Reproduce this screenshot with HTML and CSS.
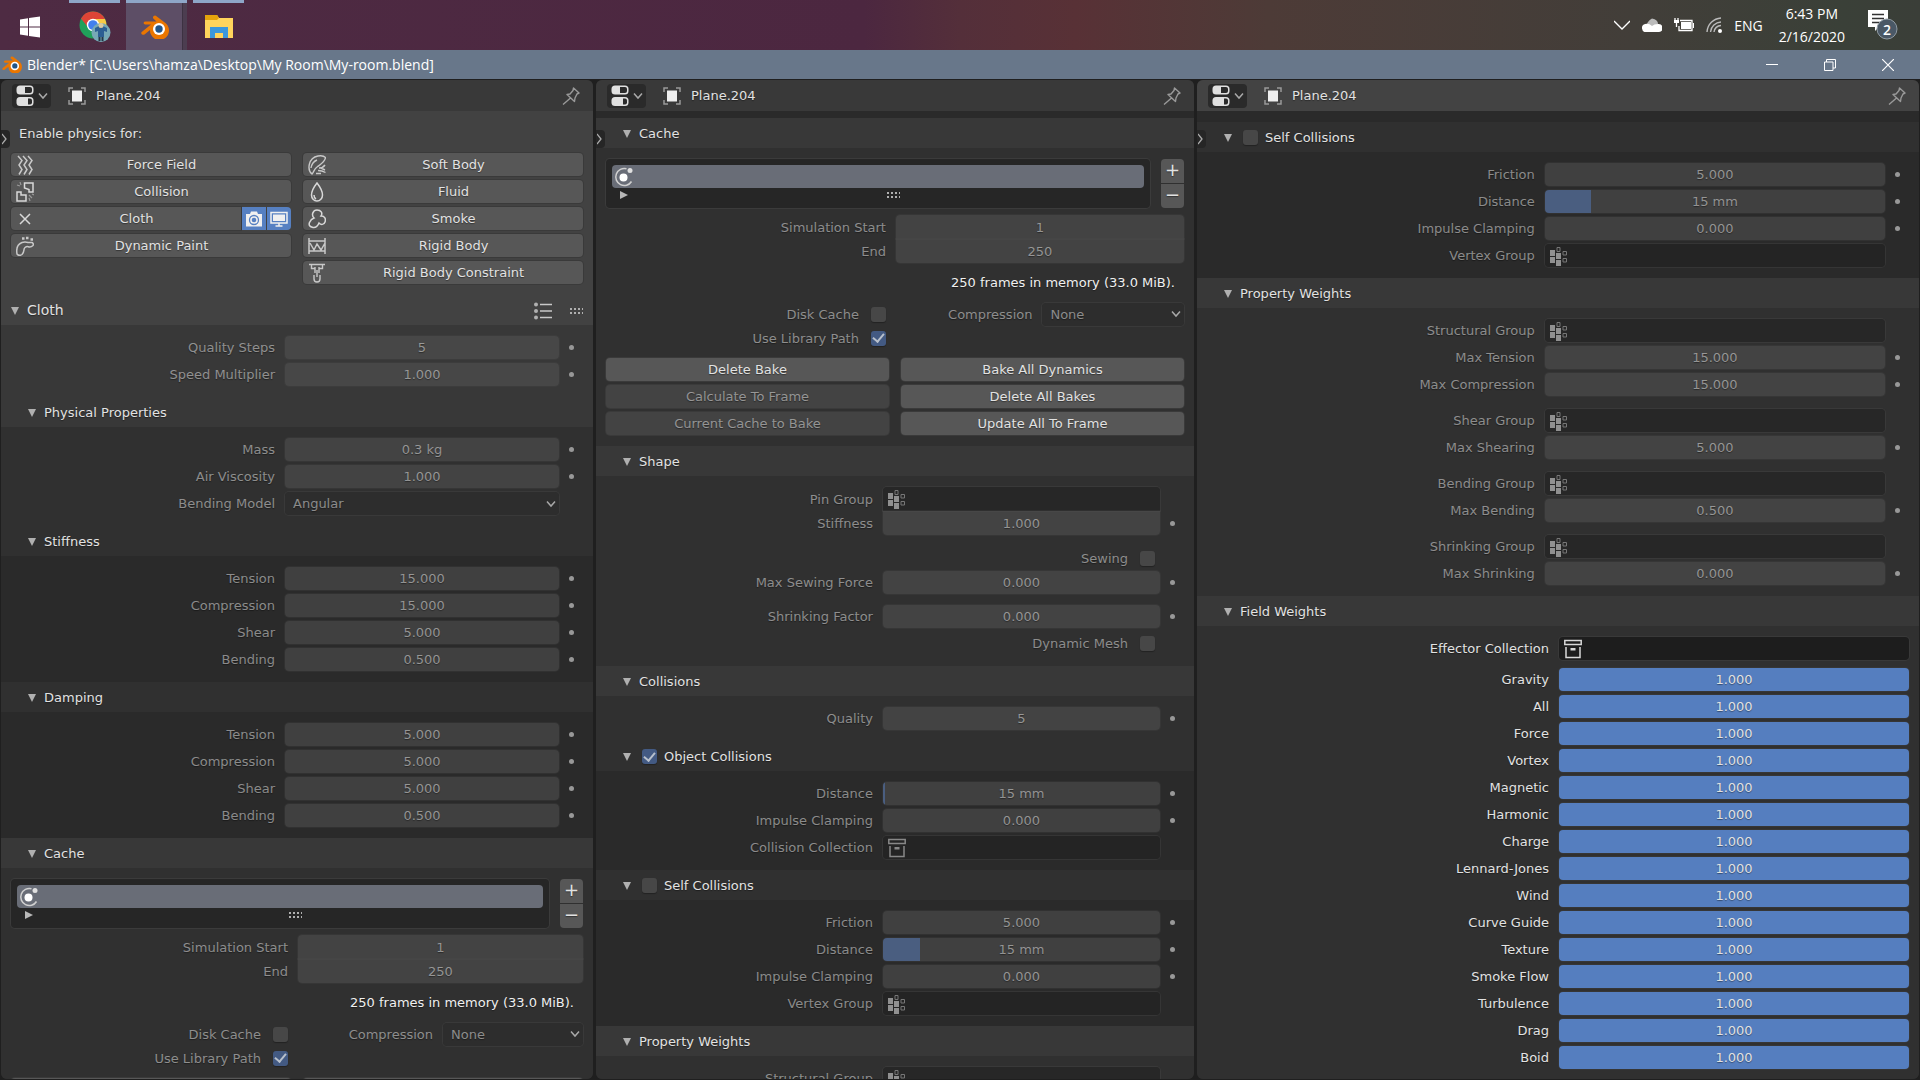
FILE: index.html
```html
<!DOCTYPE html>
<html lang="en">
<head>
<meta charset="utf-8">
<title>Blender* [C:\Users\hamza\Desktop\My Room\My-room.blend]</title>
<link rel="stylesheet" href="styles.css">
</head>
<body>
<svg class="defs" aria-hidden="true">
  <symbol id="i-tri" viewBox="0 0 10 10"><path d="M1 1h8L5 9z" fill="#b0b0b0"/></symbol>
  <symbol id="i-blender" viewBox="0 0 28 24">
    <path d="M12.500 1.200Q14 0 15.500 1.200L25 8.500A9.500 9.500 0 1 1 9 15L3.500 19.500Q1 20.500.3 18.500 0 17.500 1 16.800L10 9.500H4Q2.400 9 2.600 7.800 3 6.500 4.500 6.500H15.500L12.300 3.500Q11.500 2.200 12.500 1.200z" fill="#ea7600"/>
    <circle cx="18" cy="14" r="6" fill="#fff"/><circle cx="18" cy="14" r="3.700" fill="#225588"/>
  </symbol>
  <symbol id="i-editor" viewBox="0 0 18 22">
    <rect x=".5" y=".5" width="17" height="9" rx="3.500" fill="#e0e0e0"/><path d="M9 2h5q2 0 2 2v2q0 2-2 2H9z" fill="#2a2a2a"/>
    <rect x=".5" y="12" width="17" height="9" rx="3.500" fill="#e0e0e0"/><path d="M12 13.500h2q2 0 2 2v2q0 2-2 2h-2z" fill="#2a2a2a"/>
  </symbol>
  <symbol id="i-chev" viewBox="0 0 10 8"><path d="M1 1.500l4 4.500 4-4.500" fill="none" stroke="#a8a8a8" stroke-width="1.500"/></symbol>
  <symbol id="i-object" viewBox="0 0 18 18"><path d="M1 5V1h4M13 1h4v4M17 13v4h-4M5 17H1v-4" fill="none" stroke="#999" stroke-width="1.500"/><rect x="4" y="3.500" width="10" height="11" fill="#eee"/></symbol>
  <symbol id="i-pin" viewBox="0 0 18 18"><path d="M11.500 1l5.500 5-2 1-2 4-.5 3.500L5 7.500l3-.5 3-3.500zM8.500 11L1 17.500" fill="none" stroke="#999" stroke-width="1.400" stroke-linejoin="round"/></symbol>
  <symbol id="i-group" viewBox="0 0 18 20"><path d="M0 4h5v6H0zM0 11h5v6H0zM6 7h5v6H6zM6 14h5v6H6z" fill="#909090"/><path d="M7 1.500h3v4H7zM13 5.500h3.500v3.500H13zM13 12.500h3.500v3.500H13z" fill="none" stroke="#777"/></symbol>
  <symbol id="i-box" viewBox="0 0 18 20"><path d="M.8 1.500h16.400v4H.8zM2 8v10.500h14V8" fill="none" stroke="currentColor" stroke-width="1.500"/><path d="M6.500 9h5v2.500h-5z" fill="currentColor"/></symbol>
  <symbol id="i-cache" viewBox="0 0 20 20"><path d="M12.500 1.800A8.500 8.500 0 1 0 17.500 14.500" fill="none" stroke="#d0d0d0" stroke-width="1.500"/><circle cx="9.500" cy="10.500" r="4" fill="#fff"/><circle cx="16" cy="3.500" r="2.500" fill="#e0e0e0"/></symbol>
  <symbol id="i-grip" viewBox="0 0 14 8"><path d="M1 1h2v2H1zM5 1h2v2H5zM9 1h2v2H9zM13 1h1v2h-1zM1 5h2v2H1zM5 5h2v2H5zM9 5h2v2H9zM13 5h1v2h-1z" fill="#b0b0b0"/></symbol>
  <symbol id="i-force" viewBox="0 0 18 20"><path d="M2 1l4 4.500-3 4.500 3 4.500-3 5M7 1l4 4.500-3 4.500 3 4.500-3 5M12 1l4 4.500-3 4.500 3 4.500-3 5" fill="none" stroke="#c8c8c8" stroke-width="1.500"/></symbol>
  <symbol id="i-collision" viewBox="0 0 18 20"><path d="M8.500 1H17v9h-4V7.500L8.500 6zM1 10h4v3h5v6H1z" fill="none" stroke="#d8d8d8" stroke-width="1.500"/><path d="M1 3l3 1M4 0l1 3M13 13l3 3M13 16l1 3M16 12l2 1" stroke="#999" stroke-width="1.200"/></symbol>
  <symbol id="i-x" viewBox="0 0 18 20"><path d="M4 5l10 10M14 5L4 15" stroke="#d8d8d8" stroke-width="1.500"/></symbol>
  <symbol id="i-paint" viewBox="0 0 18 20"><path d="M1 18C0 12 2 8 6 6.500q3-1 6 0h4q2 1 1 3-2 2-4 1.500-2-1-4 .5c-2 1.500 0 4-3 7q-3 2-5-.5z" fill="none" stroke="#c8c8c8" stroke-width="1.500"/><path d="M6 2.500h2.500M10 2h2.500M14.500 3.500H17" stroke="#c8c8c8" stroke-width="2.500"/></symbol>
  <symbol id="i-soft" viewBox="0 0 18 20"><path d="M4 19C-1 15 0 3 10 1q5-1 7.500 1.500C17 7 13 9 9 12c-3 2-3 5-5 7zM3 13Q4 7 9 5M11 13q4 0 6-3M10 15.500q4 0 7.500 2M8 18.500h5M13 13l4 2" fill="none" stroke="#c8c8c8" stroke-width="1.400"/></symbol>
  <symbol id="i-fluid" viewBox="0 0 18 20"><path d="M9 1q5.500 7 5.500 12a5.500 6 0 0 1-11 0Q3.500 8 9 1zM6 13q0 3 2 4" fill="none" stroke="#d8d8d8" stroke-width="1.500"/></symbol>
  <symbol id="i-smoke" viewBox="0 0 18 20"><path d="M6 9C3 6 5 1 9 1s6 3 4 6c4 0 5 3 4 6s-4 3-6 1q-2 5-6 4.500-5-1-3.500-5Q3 10 6 9z" fill="none" stroke="#d8d8d8" stroke-width="1.500"/></symbol>
  <symbol id="i-rigid" viewBox="0 0 18 20"><path d="M1 2v16M17 2v16M1 5h16M1 15h16M2 7l4 7 3-6 4 6 4-7" fill="none" stroke="#c8c8c8" stroke-width="1.500"/></symbol>
  <symbol id="i-constraint" viewBox="0 0 18 20"><path d="M1 1.500h16M3.500 2v3.500H7M14.500 2v3.500H11M7 4v6M11 4v6M9 7v7M6 12v4q0 3 3 3t3-3v-4" fill="none" stroke="#c8c8c8" stroke-width="1.400"/></symbol>
</svg>

<div class="app">
  <header class="taskbar">
    <nav class="tasks">
      <button class="task start" aria-label="Start"><svg width="20" height="22" viewBox="0 0 20 22"><path d="M0 3.500l8-1.200v8.200H0zM9 2l11-1.500v10H9zM0 11.500h8v8.200L0 18.500zM9 11.500h11v10L9 20z" fill="#fff"/></svg></button>
      <button class="task open" aria-label="Chrome"><svg width="32" height="32" viewBox="0 0 32 32"><circle cx="14" cy="14" r="13.500" fill="#20a05a"/><path d="M2 7.500A13.500 13.500 0 0 1 26 8H14L8 15z" fill="#dd4436"/><path d="M14 8h12a13.500 13.500 0 0 1-10 19.500l4-10z" fill="#f8ca45"/><circle cx="14" cy="14" r="6.200" fill="#fff"/><circle cx="14" cy="14" r="4.800" fill="#4280ee"/><circle cx="22" cy="21.500" r="9.500" fill="#76a9b6"/><path d="M16 17l4-2h4l4 2v4l-3-1v6h-6v-6l-3 1z" fill="#2c5f93"/><circle cx="22" cy="14.500" r="2.500" fill="#d9c9a2"/><path d="M19.500 26h2v4h-2zM22.500 26h2v4h-2z" fill="#243746"/></svg></button>
      <button class="task open active" aria-label="Blender"><svg width="28" height="24"><use href="#i-blender"/></svg></button>
      <button class="task open" aria-label="File Explorer"><svg width="28" height="24" viewBox="0 0 28 24"><path d="M0 0h12l2 3h14v20H0z" fill="#ffd45c"/><path d="M0 0h12l2 3-2 2H0z" fill="#e5a30c"/><path d="M5 23V12h18v11h-5v-5h-8v5z" fill="#3b97dc"/></svg></button>
    </nav>
    <div class="tray">
      <svg width="16" height="10" viewBox="0 0 16 10"><path d="M0 1l8 8 8-8" fill="none" stroke="#fff" stroke-width="1.300"/></svg>
      <svg width="20" height="14" viewBox="0 0 20 14"><path d="M4 9q1-6 6-8.500 6 1 6 5.500l-5 4z" fill="#bbb"/><path d="M4 14a3.500 4 0 0 1-1-8q4-1 7 2 2-2 6-2a4 4 0 0 1 1 8z" fill="#fff"/></svg>
      <svg width="20" height="14" viewBox="0 0 20 14"><path d="M6 2.500h12v10H5V8M1 0v3M4 0v3M2.500 5v4" fill="none" stroke="#fff" stroke-width="1.300"/><path d="M0 2h5v3H0zM7 4h10v7H7zM19 5h1v5h-1z" fill="#fff"/></svg>
      <svg width="16" height="16" viewBox="0 0 16 16"><path d="M1 15A15 15 0 0 1 15 1M4.500 15A11 11 0 0 1 15 5M8 15a7 7 0 0 1 7-6.500" fill="none" stroke="#bbb" stroke-width="1.400"/><circle cx="14" cy="14" r="2" fill="#fff"/></svg>
      <span class="lang">ENG</span>
      <time class="clock" datetime="2020-02-16T18:43">6:43 PM<br>2/16/2020</time>
      <button class="notes" aria-label="Notifications"><svg width="32" height="32" viewBox="0 0 32 32"><path d="M1 1h20v17h-9l-4 4v-4H1z" fill="#fff"/><path d="M5 5.500h12M5 9.500h12M5 13.500h8" stroke="#333" stroke-width="1.400"/><circle cx="20" cy="20" r="10" fill="#4a5866" stroke="#8f9aa3"/></svg><b>2</b></button>
    </div>
  </header>

  <div class="titlebar">
    <svg width="20" height="17"><use href="#i-blender"/></svg>
    <span>Blender* [C:\Users\hamza\Desktop\My Room\My-room.blend]</span>
    <div class="winbtns">
      <button aria-label="Minimize"><svg width="12" height="12" viewBox="0 0 12 12"><path d="M0 5.500h12" stroke="#fff"/></svg></button>
      <button aria-label="Restore"><svg width="12" height="12" viewBox="0 0 12 12"><path d="M.5 3h8.500v8.500H.5zM2.500 3V.5h9V9H9" fill="none" stroke="#fff"/></svg></button>
      <button aria-label="Close"><svg width="12" height="12" viewBox="0 0 12 12"><path d="M0 0l12 12M12 0L0 12" stroke="#fff" stroke-width="1.200"/></svg></button>
    </div>
  </div>

  <main class="areas">
    <section class="area">
      <header class="bar">
        <button class="editor" aria-label="Editor type"><svg width="18" height="22"><use href="#i-editor"/></svg><svg width="10" height="8"><use href="#i-chev"/></svg></button>
        <svg width="18" height="18"><use href="#i-object"/></svg><span>Plane.204</span>
        <svg class="pin" width="18" height="18"><use href="#i-pin"/></svg>
      </header>
      <button class="toggle" aria-label="Show region"><svg width="6" height="12" viewBox="0 0 6 12"><path d="M0 1l4 5-4 5" fill="none" stroke="#aaa" stroke-width="1.300"/></svg></button>
      <div class="physics">
        <p>Enable physics for:</p>
        <div class="pair">
          <div class="stack">
            <button class="btn phys"><svg width="18" height="20"><use href="#i-force"/></svg>Force Field</button>
            <button class="btn phys"><svg width="18" height="20"><use href="#i-collision"/></svg>Collision</button>
            <div class="split">
              <button class="btn phys"><svg width="18" height="20"><use href="#i-x"/></svg>Cloth</button>
              <button class="on" aria-label="Render"><svg width="18" height="16" viewBox="0 0 18 16"><path d="M1 3h4l1-2.500h6L13 3h4v12.500H1z" fill="#f0f0f0"/><circle cx="9" cy="9" r="4.500" fill="none" stroke="#5680c2" stroke-width="1.300"/><circle cx="9" cy="9" r="2.300" fill="#5680c2"/></svg></button>
              <button class="on" aria-label="Realtime"><svg width="18" height="16" viewBox="0 0 18 16"><path d="M1 1.500h16v10.500H1zM9 12v3M5.500 15h7" fill="none" stroke="#f0f0f0" stroke-width="1.500"/><path d="M3 3.500h12V10H3z" fill="#f0f0f0"/></svg></button>
            </div>
            <button class="btn phys"><svg width="18" height="20"><use href="#i-paint"/></svg>Dynamic Paint</button>
          </div>
          <div class="stack">
            <button class="btn phys"><svg width="18" height="20"><use href="#i-soft"/></svg>Soft Body</button>
            <button class="btn phys"><svg width="18" height="20"><use href="#i-fluid"/></svg>Fluid</button>
            <button class="btn phys"><svg width="18" height="20"><use href="#i-smoke"/></svg>Smoke</button>
            <button class="btn phys"><svg width="18" height="20"><use href="#i-rigid"/></svg>Rigid Body</button>
            <button class="btn phys"><svg width="18" height="20"><use href="#i-constraint"/></svg>Rigid Body Constraint</button>
          </div>
        </div>
      </div>
      <div class="head top l0">
        <svg width="10" height="10"><use href="#i-tri"/></svg><h2>Cloth</h2>
        <svg class="presets" width="18" height="18" viewBox="0 0 18 18"><path d="M6 2.500h12M6 9h12M6 15.500h12" stroke="#c8c8c8" stroke-width="1.500"/><circle cx="2" cy="2.500" r="2" fill="#b0b0b0"/><circle cx="2" cy="9" r="2" fill="#b0b0b0"/><circle cx="2" cy="15.500" r="2" fill="#b0b0b0"/></svg>
        <svg width="14" height="8"><use href="#i-grip"/></svg>
      </div>
      <div class="body l1">
        <label class="row key"><span>Quality Steps</span><input class="num" value="5" disabled></label>
        <label class="row key"><span>Speed Multiplier</span><input class="num" value="1.000" disabled></label>
      </div>
      <div class="head l1"><svg width="10" height="10"><use href="#i-tri"/></svg><h3>Physical Properties</h3></div>
      <div class="body l2">
        <label class="row key"><span>Mass</span><input class="num" value="0.3 kg" disabled></label>
        <label class="row key"><span>Air Viscosity</span><input class="num" value="1.000" disabled></label>
        <label class="row"><span>Bending Model</span><span class="drop"><select disabled><option>Angular</option></select><svg width="10" height="8"><use href="#i-chev"/></svg></span></label>
      </div>
      <div class="head l2"><svg width="10" height="10"><use href="#i-tri"/></svg><h3>Stiffness</h3></div>
      <div class="body l3">
        <label class="row key"><span>Tension</span><input class="num" value="15.000" disabled></label>
        <label class="row key"><span>Compression</span><input class="num" value="15.000" disabled></label>
        <label class="row key"><span>Shear</span><input class="num" value="5.000" disabled></label>
        <label class="row key"><span>Bending</span><input class="num" value="0.500" disabled></label>
      </div>
      <div class="head l2"><svg width="10" height="10"><use href="#i-tri"/></svg><h3>Damping</h3></div>
      <div class="body l3">
        <label class="row key"><span>Tension</span><input class="num" value="5.000" disabled></label>
        <label class="row key"><span>Compression</span><input class="num" value="5.000" disabled></label>
        <label class="row key"><span>Shear</span><input class="num" value="5.000" disabled></label>
        <label class="row key"><span>Bending</span><input class="num" value="0.500" disabled></label>
      </div>
      <div class="head l1"><svg width="10" height="10"><use href="#i-tri"/></svg><h3>Cache</h3></div>
      <div class="body l2 cache">
        <div class="listrow">
          <div class="list">
            <div class="item"><svg width="20" height="20"><use href="#i-cache"/></svg></div>
            <div class="listfoot"><svg width="8" height="8" viewBox="0 0 8 8"><path d="M0 0l8 4-8 4z" fill="#b8b8b8"/></svg><svg width="14" height="8"><use href="#i-grip"/></svg></div>
          </div>
          <div class="addrem"><button aria-label="Add">+</button><button aria-label="Remove">−</button></div>
        </div>
        <div class="group">
          <label class="row wide"><span>Simulation Start</span><input class="num" value="1" disabled></label>
          <label class="row wide"><span>End</span><input class="num" value="250" disabled></label>
        </div>
        <p class="info">250 frames in memory (33.0 MiB).</p>
        <div class="group">
          <div class="row wide">
            <label class="check"><span>Disk Cache</span><input type="checkbox" disabled></label>
            <label class="comp"><span>Compression</span><span class="drop"><select disabled><option>None</option></select><svg width="10" height="8"><use href="#i-chev"/></svg></span></label>
          </div>
          <div class="row wide"><label class="check"><span>Use Library Path</span><input type="checkbox" checked disabled></label></div>
        </div>
        <div class="pair">
          <div class="stack"><button class="btn">Delete Bake</button></div>
          <div class="stack"><button class="btn">Bake All Dynamics</button></div>
        </div>
      </div>
    </section>

    <section class="area">
      <header class="bar">
        <button class="editor" aria-label="Editor type"><svg width="18" height="22"><use href="#i-editor"/></svg><svg width="10" height="8"><use href="#i-chev"/></svg></button>
        <svg width="18" height="18"><use href="#i-object"/></svg><span>Plane.204</span>
        <svg class="pin" width="18" height="18"><use href="#i-pin"/></svg>
      </header>
      <button class="toggle" aria-label="Show region"><svg width="6" height="12" viewBox="0 0 6 12"><path d="M0 1l4 5-4 5" fill="none" stroke="#aaa" stroke-width="1.300"/></svg></button>
      <div class="tail l3"></div>
      <div class="head l1"><svg width="10" height="10"><use href="#i-tri"/></svg><h3>Cache</h3></div>
      <div class="body l2 cache">
        <div class="listrow">
          <div class="list">
            <div class="item"><svg width="20" height="20"><use href="#i-cache"/></svg></div>
            <div class="listfoot"><svg width="8" height="8" viewBox="0 0 8 8"><path d="M0 0l8 4-8 4z" fill="#b8b8b8"/></svg><svg width="14" height="8"><use href="#i-grip"/></svg></div>
          </div>
          <div class="addrem"><button aria-label="Add">+</button><button aria-label="Remove">−</button></div>
        </div>
        <div class="group">
          <label class="row wide"><span>Simulation Start</span><input class="num" value="1" disabled></label>
          <label class="row wide"><span>End</span><input class="num" value="250" disabled></label>
        </div>
        <p class="info">250 frames in memory (33.0 MiB).</p>
        <div class="group">
          <div class="row wide">
            <label class="check"><span>Disk Cache</span><input type="checkbox" disabled></label>
            <label class="comp"><span>Compression</span><span class="drop"><select disabled><option>None</option></select><svg width="10" height="8"><use href="#i-chev"/></svg></span></label>
          </div>
          <div class="row wide"><label class="check"><span>Use Library Path</span><input type="checkbox" checked disabled></label></div>
        </div>
        <div class="pair">
          <div class="stack">
            <button class="btn">Delete Bake</button>
            <button class="btn" disabled>Calculate To Frame</button>
            <button class="btn" disabled>Current Cache to Bake</button>
          </div>
          <div class="stack">
            <button class="btn">Bake All Dynamics</button>
            <button class="btn">Delete All Bakes</button>
            <button class="btn">Update All To Frame</button>
          </div>
        </div>
      </div>
      <div class="head l1"><svg width="10" height="10"><use href="#i-tri"/></svg><h3>Shape</h3></div>
      <div class="body l2 shape">
        <div class="group">
          <label class="row"><span>Pin Group</span><span class="pick"><svg width="18" height="20"><use href="#i-group"/></svg><input disabled></span></label>
          <label class="row key"><span>Stiffness</span><input class="num" value="1.000" disabled></label>
        </div>
        <div class="loose">
          <label class="row tick"><span>Sewing</span><input type="checkbox" disabled></label>
          <label class="row key"><span>Max Sewing Force</span><input class="num" value="0.000" disabled></label>
        </div>
        <div class="rows">
          <label class="row key"><span>Shrinking Factor</span><input class="num" value="0.000" disabled></label>
          <label class="row tick"><span>Dynamic Mesh</span><input type="checkbox" disabled></label>
        </div>
      </div>
      <div class="head l1"><svg width="10" height="10"><use href="#i-tri"/></svg><h3>Collisions</h3></div>
      <div class="body l2">
        <label class="row key"><span>Quality</span><input class="num" value="5" disabled></label>
      </div>
      <div class="head l2"><svg width="10" height="10"><use href="#i-tri"/></svg><label class="title"><input type="checkbox" checked disabled>Object Collisions</label></div>
      <div class="body l3">
        <label class="row key"><span>Distance</span><input class="num fill" style="--fill:0.600%" value="15 mm" disabled></label>
        <label class="row key"><span>Impulse Clamping</span><input class="num" value="0.000" disabled></label>
        <label class="row"><span>Collision Collection</span><span class="pick"><svg width="18" height="20"><use href="#i-box"/></svg><input disabled></span></label>
      </div>
      <div class="head l2"><svg width="10" height="10"><use href="#i-tri"/></svg><label class="title"><input type="checkbox" disabled>Self Collisions</label></div>
      <div class="body l3">
        <label class="row key"><span>Friction</span><input class="num" value="5.000" disabled></label>
        <label class="row key"><span>Distance</span><input class="num fill" style="--fill:13.500%" value="15 mm" disabled></label>
        <label class="row key"><span>Impulse Clamping</span><input class="num" value="0.000" disabled></label>
        <label class="row"><span>Vertex Group</span><span class="pick"><svg width="18" height="20"><use href="#i-group"/></svg><input disabled></span></label>
      </div>
      <div class="head l1"><svg width="10" height="10"><use href="#i-tri"/></svg><h3>Property Weights</h3></div>
      <div class="body l2">
        <label class="row"><span>Structural Group</span><span class="pick"><svg width="18" height="20"><use href="#i-group"/></svg><input disabled></span></label>
      </div>
    </section>

    <section class="area current">
      <header class="bar">
        <button class="editor" aria-label="Editor type"><svg width="18" height="22"><use href="#i-editor"/></svg><svg width="10" height="8"><use href="#i-chev"/></svg></button>
        <svg width="18" height="18"><use href="#i-object"/></svg><span>Plane.204</span>
        <svg class="pin" width="18" height="18"><use href="#i-pin"/></svg>
      </header>
      <button class="toggle" aria-label="Show region"><svg width="6" height="12" viewBox="0 0 6 12"><path d="M0 1l4 5-4 5" fill="none" stroke="#aaa" stroke-width="1.300"/></svg></button>
      <div class="tail long l3"></div>
      <div class="head l2"><svg width="10" height="10"><use href="#i-tri"/></svg><label class="title"><input type="checkbox" disabled>Self Collisions</label></div>
      <div class="body l3">
        <label class="row key"><span>Friction</span><input class="num" value="5.000" disabled></label>
        <label class="row key"><span>Distance</span><input class="num fill" style="--fill:13.500%" value="15 mm" disabled></label>
        <label class="row key"><span>Impulse Clamping</span><input class="num" value="0.000" disabled></label>
        <label class="row"><span>Vertex Group</span><span class="pick"><svg width="18" height="20"><use href="#i-group"/></svg><input disabled></span></label>
      </div>
      <div class="head l1"><svg width="10" height="10"><use href="#i-tri"/></svg><h3>Property Weights</h3></div>
      <div class="body l2 weights">
        <div class="rows">
          <label class="row"><span>Structural Group</span><span class="pick"><svg width="18" height="20"><use href="#i-group"/></svg><input disabled></span></label>
          <label class="row key"><span>Max Tension</span><input class="num" value="15.000" disabled></label>
          <label class="row key"><span>Max Compression</span><input class="num" value="15.000" disabled></label>
        </div>
        <div class="rows">
          <label class="row"><span>Shear Group</span><span class="pick"><svg width="18" height="20"><use href="#i-group"/></svg><input disabled></span></label>
          <label class="row key"><span>Max Shearing</span><input class="num" value="5.000" disabled></label>
        </div>
        <div class="rows">
          <label class="row"><span>Bending Group</span><span class="pick"><svg width="18" height="20"><use href="#i-group"/></svg><input disabled></span></label>
          <label class="row key"><span>Max Bending</span><input class="num" value="0.500" disabled></label>
        </div>
        <div class="rows">
          <label class="row"><span>Shrinking Group</span><span class="pick"><svg width="18" height="20"><use href="#i-group"/></svg><input disabled></span></label>
          <label class="row key"><span>Max Shrinking</span><input class="num" value="0.000" disabled></label>
        </div>
      </div>
      <div class="head l1"><svg width="10" height="10"><use href="#i-tri"/></svg><h3>Field Weights</h3></div>
      <div class="body l2 field">
        <label class="row full"><span>Effector Collection</span><span class="pick"><svg width="18" height="20"><use href="#i-box"/></svg><input></span></label>
        <div class="rows">
          <label class="row full"><span>Gravity</span><input class="num" value="1.000"></label>
          <label class="row full"><span>All</span><input class="num" value="1.000"></label>
          <label class="row full"><span>Force</span><input class="num" value="1.000"></label>
          <label class="row full"><span>Vortex</span><input class="num" value="1.000"></label>
          <label class="row full"><span>Magnetic</span><input class="num" value="1.000"></label>
          <label class="row full"><span>Harmonic</span><input class="num" value="1.000"></label>
          <label class="row full"><span>Charge</span><input class="num" value="1.000"></label>
          <label class="row full"><span>Lennard-Jones</span><input class="num" value="1.000"></label>
          <label class="row full"><span>Wind</span><input class="num" value="1.000"></label>
          <label class="row full"><span>Curve Guide</span><input class="num" value="1.000"></label>
          <label class="row full"><span>Texture</span><input class="num" value="1.000"></label>
          <label class="row full"><span>Smoke Flow</span><input class="num" value="1.000"></label>
          <label class="row full"><span>Turbulence</span><input class="num" value="1.000"></label>
          <label class="row full"><span>Drag</span><input class="num" value="1.000"></label>
          <label class="row full"><span>Boid</span><input class="num" value="1.000"></label>
        </div>
      </div>
    </section>
  </main>
</div>
</body>
</html>
```
FILE: styles.css
```css
* { box-sizing: border-box; }

:root {
  --text: #e2e2e2;
  --dim: rgba(230, 230, 230, .54);
  --ui: "DejaVu Sans", Verdana, sans-serif;
  --win: "Open Sans", "Noto Sans", sans-serif;
}

body { margin: 0; background: #1f1f1f; color: var(--text); font: 13px/23px var(--ui); }
button, input, select { font: inherit; color: inherit; margin: 0; padding: 0; border: 0; background: none; text-shadow: inherit; }
h2, h3, p { margin: 0; font-size: 13px; font-weight: 400; }
svg { display: block; flex: none; }
.defs { position: absolute; width: 0; height: 0; }

.app { display: flex; flex-direction: column; height: 100vh; overflow: hidden; }

/* Windows taskbar */
.taskbar {
  flex: none; display: flex; justify-content: space-between; height: 50px;
  background: linear-gradient(90deg, #4e2b43, #4c2740 45%, #542f3a 50%, #583136 56%, #4d3b37 66%, #423e39 85%, #3a4038 96%, #3a3e38);
  color: #fff; font: 14px/23px var(--win);
}
.tasks { display: flex; gap: 6px; }
.task { display: flex; align-items: center; justify-content: center; width: 51px; border-top: 3px solid transparent; }
.task.start { width: 60px; }
.task.open { border-color: #8ea6c8; }
.task.active { width: 61px; padding-right: 3px; background: linear-gradient(90deg, #5d4e66 56px, #2e2633 56px, #4c3d50 57px); }
.task:nth-child(2) { margin-left: 3px; }
.tray { display: flex; align-items: center; gap: 12px; padding-right: 16px; border-right: 5px solid #3a3e38; }
.lang { margin-right: 4px; }
.clock { text-align: center; }
.notes { position: relative; margin-left: 10px; }
.notes b { position: absolute; left: 16px; top: 9px; font-weight: 600; }

.titlebar {
  flex: none; display: flex; align-items: center; gap: 5px; height: 29px; padding-left: 2px;
  background: #68778a; color: #fff; font: 14px/29px var(--win);
}
.winbtns { display: flex; margin-left: auto; padding-right: 3px; }
.winbtns button { display: flex; align-items: center; justify-content: center; width: 58px; height: 29px; }

/* Editor areas */
.areas { flex: 1; min-height: 0; display: grid; grid-template-columns: 592fr 598fr 722fr; gap: 3px; padding: 1px; }
.area { position: relative; min-width: 0; overflow: hidden; border-radius: 6px; background: #303030; text-shadow: 0 1px 1px rgba(0, 0, 0, .4); }
.bar { display: flex; align-items: center; height: 31px; padding: 0 13px 0 11px; background: #393939; }
.current .bar { background: #434343; }
.editor { display: flex; align-items: center; justify-content: center; gap: 4px; width: 39px; height: 24px; margin-right: 17px; border-radius: 4px; background: #2a2a2a; }
.bar span { margin-left: 10px; }
.pin { margin-left: auto; }
.toggle { position: absolute; left: 0; top: 50px; width: 9px; height: 18px; padding-left: 1px; border-radius: 0 4px 4px 0; background: #262626; }

.physics { padding: 11px 10px; background: #424242; }
.physics p { padding-left: 8px; margin-bottom: 8px; }
.pair { display: grid; grid-template-columns: 1fr 1fr; gap: 12px; }
.stack { display: flex; flex-direction: column; gap: 4px; }
.btn { height: 23px; border-radius: 4px; background: #575757; box-shadow: 0 0 0 1px #3a3a3a; text-align: center; white-space: nowrap; }
.btn:disabled { background: #434343; color: var(--dim); }
.phys { display: grid; grid-template-columns: 20px 1fr; align-items: center; padding-left: 5px; padding-right: 4px; }
.split { display: grid; grid-template-columns: 1fr 24px 24px; gap: 1px; }
.split .btn { border-radius: 4px 0 0 4px; }
.on { display: flex; align-items: center; justify-content: center; background: #5680c2; }
.on:last-child { border-radius: 0 4px 4px 0; }

/* Panel headers and bodies, darker with depth */
.l0 { background: #424242; }
.l1 { background: #383838; }
.l2 { background: #303030; }
.l3 { background: #2a2a2a; }
.head { display: flex; align-items: center; gap: 7px; height: 30px; padding: 1px 10px 0 26px; }
.top { padding-left: 9px; }
.top h2 { font-size: 14px; }
.presets { margin: 0 10px 0 auto; }
.title { display: flex; align-items: center; gap: 7px; margin-left: 3px; }
.tail { height: 7px; }
.tail.long { height: 11px; }
.body, .rows { display: flex; flex-direction: column; gap: 4px; }
.body { padding: 11px 10px; }
.cache { gap: 8px; }
.shape { gap: 11px; }
.weights { gap: 13px; }
.field { gap: 8px; }

.row { display: grid; grid-template-columns: 264fr 274fr 14px; column-gap: 10px; align-items: center; min-height: 23px; color: var(--dim); }
.row > span:first-child { text-align: right; white-space: nowrap; }
.row.key::after { content: ""; width: 5px; height: 5px; border-radius: 50%; background: #989898; }
.row.wide { grid-template-columns: 277fr 285fr; }
.row.full { grid-template-columns: 342fr 350fr; color: var(--text); }
.row.tick { grid-template-columns: 1fr 15px; padding-right: 29px; column-gap: 12px; }

.num { width: 100%; height: 23px; border-radius: 4px; background: rgba(86, 86, 86, .5); box-shadow: 0 0 0 1px rgba(80, 80, 80, .2); text-align: center; }
.fill { background: linear-gradient(90deg, #4a5e80 var(--fill), #404040 var(--fill)); }
.full .num { background: #557ebf; }
.pick { display: flex; align-items: center; height: 23px; padding-left: 5px; border-radius: 4px; background: rgba(29, 29, 29, .5); box-shadow: 0 0 0 1px rgba(80, 80, 80, .3); color: #888; }
.pick input { flex: 1; min-width: 0; }
.full .pick { background: #1d1d1d; color: #d8d8d8; }
.drop { display: flex; align-items: center; height: 23px; padding: 0 3px 0 8px; border-radius: 4px; background: rgba(42, 42, 42, .5); box-shadow: 0 0 0 1px rgba(80, 80, 80, .3); }
.drop select { flex: 1; min-width: 0; appearance: none; opacity: 1; }

input[type="checkbox"] { appearance: none; display: grid; place-items: center; width: 15px; height: 15px; border-radius: 3px; background: #474747; box-shadow: 0 1px 1px rgba(0, 0, 0, .3); }
input[type="checkbox"]:checked { background: #435a83; }
input[type="checkbox"]:checked::after { content: ""; width: 5px; height: 9px; margin-bottom: 3px; border: solid #b8c0cc; border-width: 0 2px 2px 0; rotate: 40deg; }

.group, .loose { display: flex; flex-direction: column; }
.group .row, .loose .row { height: 24px; }
.group .num, .group .row > .pick { height: 24px; }
.group .row:first-child > .num, .group .row:first-child > .pick { border-radius: 4px 4px 0 0; }
.group .row:last-child > .num { border-radius: 0 0 4px 4px; }
.check { display: flex; align-items: center; justify-content: flex-end; gap: 12px; }
.comp { display: grid; grid-template-columns: 135fr 140fr; gap: 10px; text-align: right; }
.info { padding-right: 9px; text-align: right; color: #f0f0f0; }

.listrow { display: grid; grid-template-columns: 1fr 23px; gap: 11px; height: 48px; }
.list { padding: 6px; border-radius: 4px; background: #262626; box-shadow: 0 0 0 1px #3b3b3b; }
.item { display: flex; align-items: center; height: 23px; padding-left: 2px; border-radius: 4px; background: #696d77; }
.listfoot { display: grid; grid-template-columns: 266fr 14px 244fr; align-items: center; height: 14px; padding-left: 8px; }
.addrem { display: grid; gap: 1px; }
.addrem button { padding-bottom: 3px; border-radius: 4px 4px 0 0; background: #575757; font-size: 18px; line-height: 20px; }
.addrem button:last-child { border-radius: 0 0 4px 4px; }
```
